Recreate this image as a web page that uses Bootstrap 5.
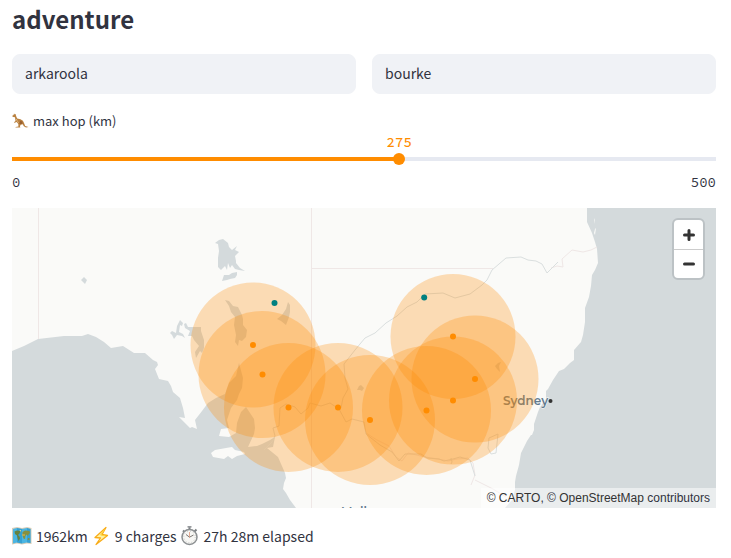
<!DOCTYPE html>
<html lang="en">
<head>
<meta charset="utf-8">
<meta name="viewport" content="width=device-width, initial-scale=1">
<title>adventure</title>
<link href="https://cdn.jsdelivr.net/npm/bootstrap@5.3.0/dist/css/bootstrap.min.css" rel="stylesheet">
<style>
  body { font-family: "Source Sans Pro", "Noto Sans CJK SC", sans-serif; font-size: 14px; line-height: 24px; color: #31333f; }
  .page { padding: 2px 15px 0 12px; }
  h1 { font-size: 24px; line-height: 34px; font-weight: 700; margin-bottom: 18px; }
  .town { height: 40px; padding: 0 12px 2px; background: #f0f2f6; border: 1px solid #f0f2f6; border-radius: 8px; font-size: 14px; line-height: 24px; color: #31333f; }
  .town:focus { background: #f0f2f6; border-color: #ff8c00; box-shadow: none; color: #31333f; }
  .hop-label { font-size: 13px; line-height: 20px; margin-top: 17px; }
  .tick { font-family: "Source Code Pro", "Liberation Mono", monospace; font-size: 14px; line-height: 20px; }
  .hop-value { display: block; width: max-content; margin: 1px 0 0 var(--pos); transform: translateX(-50%); color: #ff8c00; font-weight: 500; }
  .hop { appearance: none; -webkit-appearance: none; display: block; width: 100%; height: 12px; margin: 1px 0 7px; background: linear-gradient(to right, #ff8c00 var(--pos), #e6e9f1 var(--pos)) center / 100% 4px no-repeat; border-radius: 4px; }
  .hop::-webkit-slider-thumb { -webkit-appearance: none; width: 12px; height: 12px; border: 0; border-radius: 50%; background: #ff8c00; }
  .hop::-moz-range-thumb { width: 12px; height: 12px; border: 0; border-radius: 50%; background: #ff8c00; }
  .map { height: 300px; margin-top: 16px; background: #d4dadc; }
  .zoomer { top: 10px; right: 11px; background: #fff; border: 2px solid #bcc2c5; border-radius: 6px; }
  .zoomer button { width: 29px; height: 29px; border: 0; padding: 0; background: none; display: block; }
  .zoomer button + button { border-top: 1px solid #ccc; }
  .zoomer svg { display: block; margin: auto; }
  .credit { bottom: 0; right: 0; padding: 0 6px; background: rgba(255,255,255,.5); font: 12px/20px "Liberation Sans", Arial, sans-serif; }
  .credit a { color: #333; text-decoration: none; }
  .totals { margin-top: 16px; gap: 4px; }
  .place { font: 600 12px "Montserrat", "Inter", sans-serif; fill: #627b8f; stroke: #fafaf8; stroke-width: 1px; paint-order: stroke; }
</style>
</head>
<body>
<main class="page">
  <h1>adventure</h1>
  <div class="row gx-3">
    <div class="col"><input class="form-control town" type="text" value="arkaroola" aria-label="from"></div>
    <div class="col"><input class="form-control town" type="text" value="bourke" aria-label="to"></div>
  </div>

  <label class="hop-label d-flex align-items-center gap-1" for="hop">
    <svg width="17" height="16" viewBox="0 0 17 16" aria-hidden="true">
      <path d="M0 3 1.600 1.900 2 .6 2.900 1.600 3.800 .9 3.900 2.500 4.300 3.500 5.200 5.600 8.500 6.300Q11.600 7.300 12 10L13.200 13 16.500 13.900 14 14.500 11.800 13.300 10.700 11.200 8.600 11.800 8 13.200 8.300 14.600 3.500 14.600 3.600 13.900 6.400 13.500 6.300 11 4.700 9 3.300 9.500 2.200 10 2.300 9.100 3.500 8 3 4.300 1.200 4Z" fill="#b9803f"/>
      <path d="M8.500 7.500Q11 8.500 10.500 10.400L8.800 11.300 7.300 10.500" fill="#996030"/>
      <path d="M4.300 6 5.300 8.300 6.800 9.600" stroke="#ddb37b" fill="none"/>
    </svg>
    <span>max hop (km)</span>
  </label>
  <div style="--pos:55%">
    <output class="tick hop-value" for="hop">275</output>
    <input class="hop" id="hop" type="range" min="0" max="500" value="275">
  </div>
  <div class="tick d-flex justify-content-between"><span>0</span><span>500</span></div>

  <section class="map position-relative overflow-hidden" aria-label="route map">
    <svg class="d-block w-100 h-100" viewBox="12 208 704 300" preserveAspectRatio="xMidYMid slice">
      <!-- land -->
      <path fill="#fafaf8" d="M12 208H587V222L592 233 595 242 597 249 598 263 595 270 592 275 591 286 589 297 585 308V322L583 335 581 342 574 350V360L570 363 565 368 564 369 559 371 553 380 548 389 546 391 546 399 540 407 538 412 534 424 534 430 532 435H531L527 441 521 453 519 465 516 476 515 482V490L512 500 505 508H296L290 500 286 493 283 489 284 483 286 478 285 473 278 457 267 448 273 447 275 437 270 440 262 444 257 446 248 447 254 434 255 428 254 419 246 407 241 412 237 423 236 433 229 437 219 436 221 429 229 428 227 420 231 408 237 400 239 394 242 388 243 378 239 363 236 376 229 383 225 394 216 398 208 403 202 411 195 420 197 429 192 427 190 428 179 417 185 418 183 408 180 398 173 392 171 386 168 381 159 379 155 369 158 365 157 362 153 360 145 353H134L123 346 111 348 104 342 96 337 88 334 82 336H64L38 339 24 346 12 351Z"/>
      <path fill="#fafaf8" d="M211 453 215 450 226 448 232 447 235 450 244 452 245 454 237 456 232 459 228 456 224 459 213 457ZM594 220 595 218 594 224ZM595 229 596 228 595 235 594 233Z"/>
      <!-- lakes -->
      <g fill="#d4dadc">
        <path d="M215 243 219 240 223 239 228 243 229 247 232 250 237 246 235 250 239 252 235 256 236 261 236 263 240 268 245 271 239 270 235 269 232 265 230 268 228 263 227 270 225 266 221 270 218 267V258L219 251 218 244ZM222 281 224 275 229 275 232 273 237 272 237 275 235 278 230 279 227 280ZM81 280 84 277 87 280 85 284Z"/>
        <path d="M225 300 229 301 233 306 238 307 242 315 243 319 243 325 247 330 246 337 242 341 239 340 238 346 235 342 236 335 234 325 235 317 231 312 229 306ZM277 319 282 315 286 309 288 302 290 305V312L289 317 286 325 281 321Z"/>
        <path d="M170 333 172 331 176 333 177 326 180 320 183 323 182 326 180 325 179 332 183 334 185 338 182 336 177 335 174 339 172 335ZM184 324 186 323 188 327H201L201 331 204 340 204 348 202 353 200 351 196 358 195 352 199 346 194 340 192 336 188 336 190 331 185 328Z"/>
        <path d="M357 390 359 386 361 385 364 388 362 391 360 390ZM495 366 498 363 501 362 499 366 500 372 497 369Z"/>
      </g>
      <!-- state borders -->
      <g fill="none" stroke="#efe7e6">
        <path d="M38.500 208V339M311.500 208V508M311.500 268.500H493M551 268 557 266 563 267 562 259 572 250 583 252 591 250 597 247"/>
        <path d="M366 433 377 440 389 446 396 457 402 461 408 453 425 457 438 459 448 461 457 459 468 458 473 463 475 475 471 485M475 480 493 489 506 497"/>
      </g>
      <!-- rivers -->
      <g fill="none" stroke="#dadfdf">
        <path d="M264 450 272 442 275 436 273 428 279 426 280 408 286 404 295 407 301 414 308 408 310 403 321 406 330 403 339 409 346 422 352 419 364 422 366 434 380 445 392 452 399 461 405 454 421 454 427 458 439 459 444 461 453 459 460 457 470 460 475 476"/>
        <path d="M341 408 343 398 348 389 345 378 344 364 355 350 365 338 375 333 386 323 397 316 407 307 417 302 425 294 443 293 455 298 470 294 482 285 487 280 492 270 499 264 506 258 521 257 528 260 536 261 542 264 547 273 552 268 558 262"/>
        <path d="M451 458 452 462 451 464M489 438 498 434 496 453 491 454 488 448Z"/>
      </g>
      <text class="place" x="503" y="405">Sydney</text>
      <circle cx="550.500" cy="401" r="2" fill="#333"/>
      <text class="place" x="341" y="516">Melbourne</text>
      <!-- reach of each charge -->
      <g fill="#ff8c00" fill-opacity=".275">
        <circle cx="253" cy="345" r="62.500"/><circle cx="262" cy="374.500" r="63.500"/><circle cx="288.500" cy="407.500" r="64.500"/>
        <circle cx="338" cy="407.500" r="64.500"/><circle cx="370" cy="420" r="65"/><circle cx="426.500" cy="410.500" r="64.500"/>
        <circle cx="453" cy="400.500" r="64"/><circle cx="475" cy="379" r="63.500"/><circle cx="453" cy="336.500" r="62.500"/>
      </g>
      <g fill="#ff8c00">
        <circle cx="253" cy="345" r="3"/><circle cx="262.500" cy="374.500" r="3"/><circle cx="288.500" cy="407.500" r="3"/>
        <circle cx="338" cy="407.500" r="3"/><circle cx="370" cy="420" r="3"/><circle cx="426.500" cy="410.500" r="3"/>
        <circle cx="453" cy="400.500" r="3"/><circle cx="475" cy="379" r="3"/><circle cx="453" cy="336.500" r="3"/>
      </g>
      <g fill="#008080"><circle cx="274.500" cy="303" r="3"/><circle cx="424.200" cy="297.500" r="3"/></g>
    </svg>
    <div class="zoomer position-absolute">
      <button type="button" aria-label="Zoom in"><svg width="12" height="12" viewBox="0 0 12 12"><path d="M1.500 6h9M6 1.500v9" stroke="#333" stroke-width="3" stroke-linecap="round"/></svg></button>
      <button type="button" aria-label="Zoom out"><svg width="12" height="12" viewBox="0 0 12 12"><path d="M1.500 6h9" stroke="#333" stroke-width="3" stroke-linecap="round"/></svg></button>
    </div>
    <div class="credit position-absolute"><a href="#carto">© CARTO</a>, © <a href="#osm">OpenStreetMap</a> contributors</div>
  </section>

  <div class="totals d-flex align-items-center">
    <svg width="20" height="20" viewBox="0 0 20 20" aria-hidden="true">
      <path d="M0 2 5 1 10 2 15 1 19.500 2V18L15 17.500 10 18.500 5 17.500 0 18.500Z" fill="#d9cdb8"/>
      <path d="M1 3 5 2 10 3 15 2 18.500 3V17L15 16.500 10 17.500 5 16.500 1 17.500Z" fill="#4bb5e2"/>
      <path d="M5 2 10 3V17.500L5 16.500ZM15 2 18.500 3V17L15 16.500Z" fill="#2590c6" opacity=".55"/>
      <path d="M2.500 5.500 5 4.500 8.500 5 7.500 7.500 6 9 7.500 10.500 8 12.500 6.500 15 5.500 12 5 9.500 3 8Z" fill="#66813f"/>
      <path d="M10.500 6 13 4.500 17.500 5 18 7 16.500 8.500 16 10 14.500 8.500 13.500 10 13 13 11.500 12.500 10.500 9.500ZM16 12 17.500 12 17.500 14 15.500 14Z" fill="#879040"/>
      <path d="M7.500 4 9 4 8.500 6Z" fill="#e6d985"/><path d="M10 9h3" stroke="#e6b94e"/>
    </svg>
    <span>1962km</span>
    <svg width="19" height="20" viewBox="0 0 18 20" aria-hidden="true">
      <path d="M13.500 1.500 2.500 11.500 8 12 3.500 18.500 15 9.500 9.500 8.500Z" fill="#fff3a6" stroke="#f9ac18" stroke-width="1.300" stroke-linejoin="round"/>
      <path d="M12 3.500 8 9 13 10" fill="none" stroke="#ffd83c"/>
    </svg>
    <span>9 charges</span>
    <svg width="19" height="20" viewBox="0 0 18 20" aria-hidden="true">
      <path d="M9 1v3M2.500 4.500 4 6M14 5.500l2-2" stroke="#7c8083" stroke-width="2"/>
      <path d="M7 .8h4" stroke="#969a9d" stroke-width="1.600"/>
      <circle cx="9" cy="11" r="7.500" fill="#f7f7f4" stroke="#8c9092" stroke-width="1.500"/>
      <circle cx="9" cy="11" r="5.700" fill="none" stroke="#aaa" stroke-width="1" stroke-dasharray=".6 2.400"/>
      <path d="M5.500 8.500 9 11.200 13 9" fill="none" stroke="#7b7774"/><path d="M9 11.500V6" stroke="#e2997c" stroke-width=".8"/>
    </svg>
    <span>27h 28m elapsed</span>
  </div>
</main>
</body>
</html>
